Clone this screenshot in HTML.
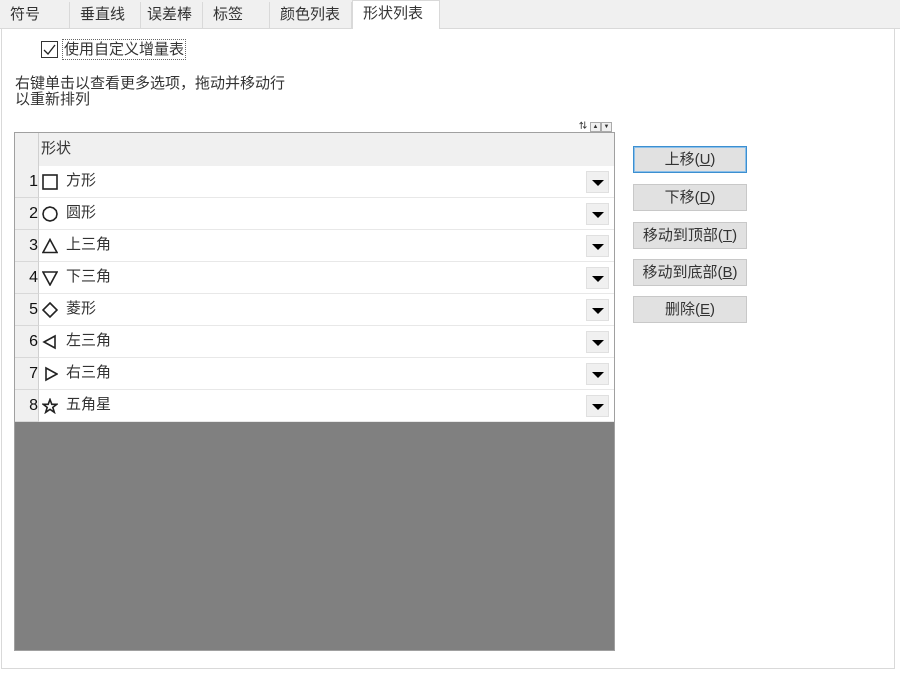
<!DOCTYPE html>
<html><head><meta charset="utf-8"><style>
body{margin:0;width:900px;height:679px;background:#fff;font-family:"Liberation Sans","Noto Sans CJK SC",sans-serif;font-size:15px;color:#333;position:relative;overflow:hidden}
.tabs{position:absolute;left:0;top:0;width:900px;height:28px;background:#f0f0f0;border-bottom:1px solid #d9d9d9}
.tab{position:absolute;top:2px;height:26px;border-right:1px solid #d9d9d9;line-height:26px;padding-left:10px;box-sizing:border-box}
.tab.act{background:#fff;top:0;height:29px;border:1px solid #d9d9d9;border-bottom:none}
.panel{position:absolute;left:1px;top:28px;width:892px;height:640px;border:1px solid #d9d9d9;border-top:none}
.abs{position:absolute}
.grid{position:absolute;left:14px;top:132px;width:601px;height:519px;background:#808080;border:1px solid #a0a0a0;box-sizing:border-box}
.hdr{position:absolute;left:0;top:0;width:599px;height:33px;background:#f0f0f0;border-bottom:1px solid #c8c8c8}
.row{position:absolute;left:0;width:599px;height:32px;background:#fff;border-bottom:1px solid #e8e8e8;box-sizing:border-box}
.num{position:absolute;left:0;top:0;width:23px;height:31px;background:#f0f0f0;border-right:1px solid #d0d0d0;border-bottom:1px solid #d8d8d8;text-align:right;line-height:31px;font-size:16px;color:#111}
.ic{position:absolute;left:27px;top:8px}
.lb{position:absolute;left:51px;top:0;line-height:30px}
.dd{position:absolute;left:571px;top:5px;width:23px;height:22px;background:#f0f0f0;border:1px solid #e0e0e0;box-sizing:border-box}
.dd:after{content:"";position:absolute;left:5px;top:8px;border-left:6px solid transparent;border-right:6px solid transparent;border-top:6px solid #000}
.btn{position:absolute;left:633px;width:114px;height:27px;background:#e1e1e1;border:1px solid #c8c8c8;box-sizing:border-box;text-align:center;line-height:25px;color:#333}
</style></head><body>
<div class="panel"></div>
<div class="tabs">
<div class="tab" style="left:0;width:70px">符号</div>
<div class="tab" style="left:70px;width:71px">垂直线</div>
<div class="tab" style="left:141px;width:62px;padding-left:6px">误差棒</div>
<div class="tab" style="left:203px;width:67px">标签</div>
<div class="tab" style="left:270px;width:82px">颜色列表</div>
<div class="tab act" style="left:352px;width:88px">形状列表</div>
</div>
<div class="abs" style="left:41px;top:41px;width:17px;height:17px;border:1px solid #333;box-sizing:border-box"><svg width="15" height="15" style="position:absolute;left:0;top:0"><path d="M2 8 L6 12 L13 3" stroke="#222" fill="none" stroke-width="1.3"/></svg></div>
<div class="abs" style="left:62px;top:39px;border:1px dotted #666;line-height:19px;padding:0 1px">使用自定义增量表</div>
<div class="abs" style="left:15px;top:76px;line-height:16px">右键单击以查看更多选项，拖动并移动行<br>以重新排列</div>
<div class="abs" style="left:579px;top:121px;font-size:8px;line-height:9px;width:36px;height:10px"><span style="display:inline-block;width:11px;height:9px;font-weight:bold">⇅</span><span style="display:inline-block;width:9px;height:8px;border:1px solid #aaa;background:#f0f0f0;font-size:6px;text-align:center">▲</span><span style="display:inline-block;width:9px;height:8px;border:1px solid #aaa;background:#f0f0f0;font-size:6px;text-align:center">▼</span></div>
<div class="grid">
<div class="hdr"><div style="position:absolute;left:0;top:0;width:23px;height:33px;border-right:1px solid #d0d0d0"></div><div style="position:absolute;left:26px;line-height:32px">形状</div></div>
<div class="row" style="top:33px"><div class="num">1</div><svg class="ic" width="16" height="16"><rect x="1" y="1" width="14" height="14" fill="none" stroke="#222" stroke-width="1.6"/></svg><div class="lb">方形</div><div class="dd"></div></div>
<div class="row" style="top:65px"><div class="num">2</div><svg class="ic" width="16" height="16"><polygon points="8,1 11.5,2 14.2,4.5 15,8 14.2,11.5 11.5,14 8,15 4.5,14 1.8,11.5 1,8 1.8,4.5 4.5,2" fill="none" stroke="#222" stroke-width="1.6"/></svg><div class="lb">圆形</div><div class="dd"></div></div>
<div class="row" style="top:97px"><div class="num">3</div><svg class="ic" width="16" height="16"><polygon points="8,1.5 15,14.5 1,14.5" fill="none" stroke="#222" stroke-width="1.6"/></svg><div class="lb">上三角</div><div class="dd"></div></div>
<div class="row" style="top:129px"><div class="num">4</div><svg class="ic" width="16" height="16"><polygon points="1,2 15,2 8,15" fill="none" stroke="#222" stroke-width="1.6"/></svg><div class="lb">下三角</div><div class="dd"></div></div>
<div class="row" style="top:161px"><div class="num">5</div><svg class="ic" width="16" height="16"><polygon points="8,1 15,8 8,15 1,8" fill="none" stroke="#222" stroke-width="1.6"/></svg><div class="lb">菱形</div><div class="dd"></div></div>
<div class="row" style="top:193px"><div class="num">6</div><svg class="ic" width="16" height="16"><polygon points="2,8 13,2 13,14" fill="none" stroke="#222" stroke-width="1.6"/></svg><div class="lb">左三角</div><div class="dd"></div></div>
<div class="row" style="top:225px"><div class="num">7</div><svg class="ic" width="16" height="16"><polygon points="4,2 15,8 4,14" fill="none" stroke="#222" stroke-width="1.6"/></svg><div class="lb">右三角</div><div class="dd"></div></div>
<div class="row" style="top:257px"><div class="num">8</div><svg class="ic" width="16" height="16"><polygon points="8,1.5 9.8,6.3 14.8,6.3 10.8,9.4 12.3,14.3 8,11.3 3.7,14.3 5.2,9.4 1.2,6.3 6.2,6.3" fill="none" stroke="#222" stroke-width="1.6"/></svg><div class="lb">五角星</div><div class="dd"></div></div>
</div>
<div class="btn" style="top:146px;border:1px solid #3c8fd0;box-shadow:inset 0 0 0 1px #8cc0ea">上移(<u>U</u>)</div>
<div class="btn" style="top:184px">下移(<u>D</u>)</div>
<div class="btn" style="top:222px">移动到顶部(<u>T</u>)</div>
<div class="btn" style="top:259px">移动到底部(<u>B</u>)</div>
<div class="btn" style="top:296px">删除(<u>E</u>)</div>
</body></html>
